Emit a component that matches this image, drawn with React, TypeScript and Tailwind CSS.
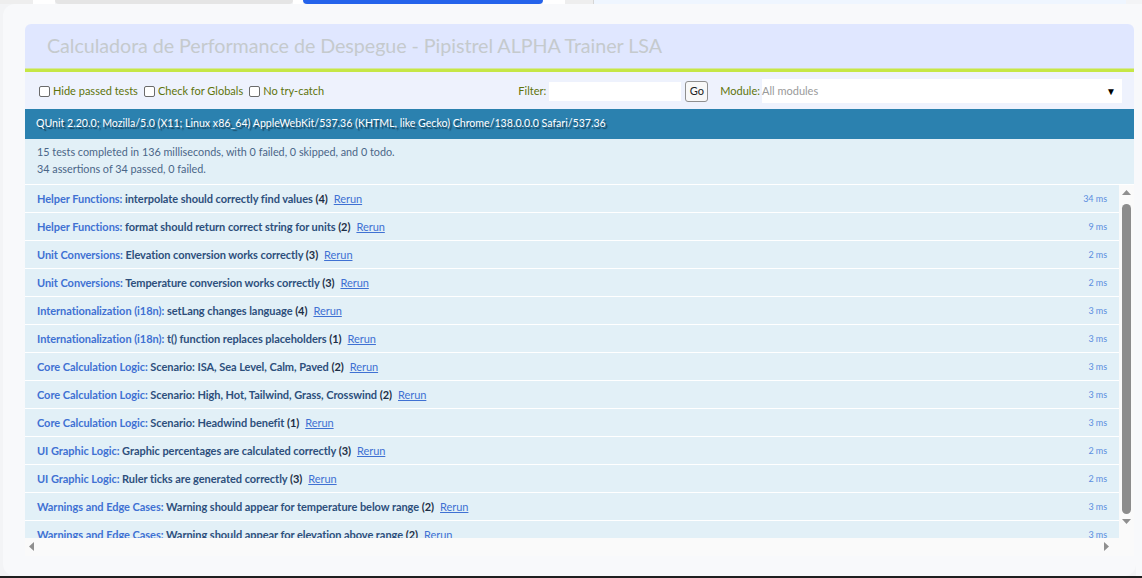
import React from "react";

const rows: [string, string, string, string][] = [
  ["Helper Functions:", "interpolate should correctly find values", "4", "34 ms"],
  ["Helper Functions:", "format should return correct string for units", "2", "9 ms"],
  ["Unit Conversions:", "Elevation conversion works correctly", "3", "2 ms"],
  ["Unit Conversions:", "Temperature conversion works correctly", "3", "2 ms"],
  ["Internationalization (i18n):", "setLang changes language", "4", "3 ms"],
  ["Internationalization (i18n):", "t() function replaces placeholders", "1", "3 ms"],
  ["Core Calculation Logic:", "Scenario: ISA, Sea Level, Calm, Paved", "2", "3 ms"],
  ["Core Calculation Logic:", "Scenario: High, Hot, Tailwind, Grass, Crosswind", "2", "3 ms"],
  ["Core Calculation Logic:", "Scenario: Headwind benefit", "1", "3 ms"],
  ["UI Graphic Logic:", "Graphic percentages are calculated correctly", "3", "2 ms"],
  ["UI Graphic Logic:", "Ruler ticks are generated correctly", "3", "2 ms"],
  ["Warnings and Edge Cases:", "Warning should appear for temperature below range", "2", "3 ms"],
  ["Warnings and Edge Cases:", "Warning should appear for elevation above range", "2", "3 ms"],
];

function Check({ label }: { label: string }) {
  return (
    <label className="flex items-center gap-[3px] mr-[6px]">
      <span className="w-[11px] h-[11px] border border-[#6b6b6b] rounded-[2px] bg-white" />
      <span>{label}</span>
    </label>
  );
}

export default function App() {
  return (
    <div
      className="w-[1142px] h-[578px] overflow-hidden bg-[#f3f4f6] flex flex-col"
      style={{ fontFamily: "Lato, 'Noto Sans', sans-serif" }}
    >
      {/* top strip remnants */}
      <div className="h-[4px] flex shrink-0 bg-[#f3f4f6]">
        <div className="w-[33px] bg-[#eeeeee]" />
        <div className="w-[22px] bg-white" />
        <div className="w-[238px] bg-[#e5e5e5] rounded-b-[4px]" />
        <div className="w-[10px] bg-white" />
        <div className="w-[240px] bg-[#2563eb] rounded-b-[4px]" />
        <div className="w-[22px] bg-white" />
        <div className="w-[28px] bg-[#eeeeee]" />
        <div className="w-[1px] bg-[#d6d6d6]" />
        <div className="w-[532px] bg-[#eff6ff]" />
        <div className="flex-1 bg-[#f3f4f6]" />
      </div>

      <div className="flex-1 flex min-h-0">
        <div className="w-[3px] bg-[#f3f4f6]" />
        <div className="w-[1133px] bg-[#f8f9fb] rounded-[12px] rounded-tr-none pl-[22px] pt-[20px] pb-[20px] flex flex-col">
          <div className="w-[1109px] flex flex-col flex-1 min-h-0 rounded-t-[6px] overflow-hidden">
            {/* header */}
            <div className="h-[44px] bg-[#e0e7ff] flex items-center pl-[22px] shrink-0">
              <span className="text-[19.7px] text-[#c5cacd] tracking-[-0.05px]">
                Calculadora de Performance de Despegue - Pipistrel ALPHA Trainer LSA
              </span>
            </div>
            <div className="h-[4px] bg-[#c6e746] border-t border-[#d6e6a0] shrink-0" />
            {/* toolbar */}
            <div className="h-[37px] bg-[#eef2fd] flex items-center pl-[14px] pr-[12px] pt-[1px] text-[11px] text-[#5e740b] shrink-0">
              <Check label="Hide passed tests" />
              <Check label="Check for Globals" />
              <Check label="No try-catch" />
              <div className="ml-auto flex items-center">
                <span>Filter:</span>
                <span className="ml-[3px] w-[132px] h-[19px] bg-white" />
                <span className="ml-[4px] w-[23px] h-[21px] border border-[#8f8f8f] rounded-[3px] bg-[#f8f8f8] flex items-center justify-center text-[#222] text-[11px]">
                  Go
                </span>
                <span className="ml-[12px]">Module:</span>
                <div className="ml-[2px] w-[360px] h-[24px] bg-white flex items-center justify-between pr-[6px]">
                  <span className="text-[#9a9a9a]">All modules</span>
                  <span className="text-black text-[10px]">▼</span>
                </div>
              </div>
            </div>
            {/* user agent */}
            <div
              className="h-[30px] bg-[#2b81af] flex items-center pl-[11px] pb-[1px] text-white text-[10.6px] shrink-0"
              style={{ textShadow: "rgba(0,0,0,0.5) 2px 2px 1px" }}
            >
              QUnit 2.20.0; Mozilla/5.0 (X11; Linux x86_64) AppleWebKit/537.36 (KHTML, like Gecko) Chrome/138.0.0.0 Safari/537.36
            </div>
            {/* result */}
            <div className="h-[46px] bg-[#e2f0f7] border-b border-white flex flex-col justify-center pl-[12px] pb-[4px] text-[10.8px] leading-[17px] text-[#4a6688] shrink-0">
              <div>15 tests completed in 136 milliseconds, with 0 failed, 0 skipped, and 0 todo.</div>
              <div>34 assertions of 34 passed, 0 failed.</div>
            </div>
            {/* list with scrollbars */}
            <div className="flex-1 min-h-0 flex flex-col bg-[#fafafa]">
              <div className="flex h-[353px]">
                <div className="w-[1094px] overflow-hidden flex flex-col">
                  {rows.map((r, i) => (
                    <div
                      key={i}
                      className="h-[28px] shrink-0 bg-[#e2f0f7] border-b border-white flex items-center pl-[12px] pr-[12px] pt-[1px] text-[11px] tracking-[-0.05px]"
                    >
                      <strong className="font-bold">
                        <span className="text-[#3f71d3]">{r[0]}</span>{" "}
                        <span className="text-[#2d4f7c]">{r[1]}</span>{" "}
                        <span className="text-[#1d2e45]">({r[2]})</span>
                      </strong>
                      <span className="ml-[6px] text-[#3f71d3] underline">Rerun</span>
                      <span className="ml-auto text-[9px] text-[#5b8ee0]">{r[3]}</span>
                    </div>
                  ))}
                </div>
                <div className="w-[15px] bg-[#fafafa] flex flex-col items-center">
                  <svg width="9" height="6" viewBox="0 0 9 6" className="mt-[5px]">
                    <polygon points="4.5,0 9,5 0,5" fill="#8f8f8f" />
                  </svg>
                  <div className="w-[9px] mt-[8px] h-[310px] rounded-full bg-[#8c8c8c]" />
                  <svg width="9" height="6" viewBox="0 0 9 6" className="mt-[5px]">
                    <polygon points="0,0 9,0 4.5,5" fill="#8f8f8f" />
                  </svg>
                </div>
              </div>
              <div className="h-[15px] flex items-center justify-between px-[4px] pt-[2px] w-[1094px]">
                <svg width="6" height="9" viewBox="0 0 6 9">
                  <polygon points="0,4.5 5,0 5,9" fill="#8f8f8f" />
                </svg>
                <svg width="6" height="9" viewBox="0 0 6 9" className="mr-[5px]">
                  <polygon points="0,0 5,4.5 0,9" fill="#8f8f8f" />
                </svg>
              </div>
            </div>
          </div>
        </div>
        <div className="flex-1 bg-[#f8f9fb]" />
      </div>
      <div className="h-[2px] bg-[#1f1f1f] shrink-0" />
    </div>
  );
}
